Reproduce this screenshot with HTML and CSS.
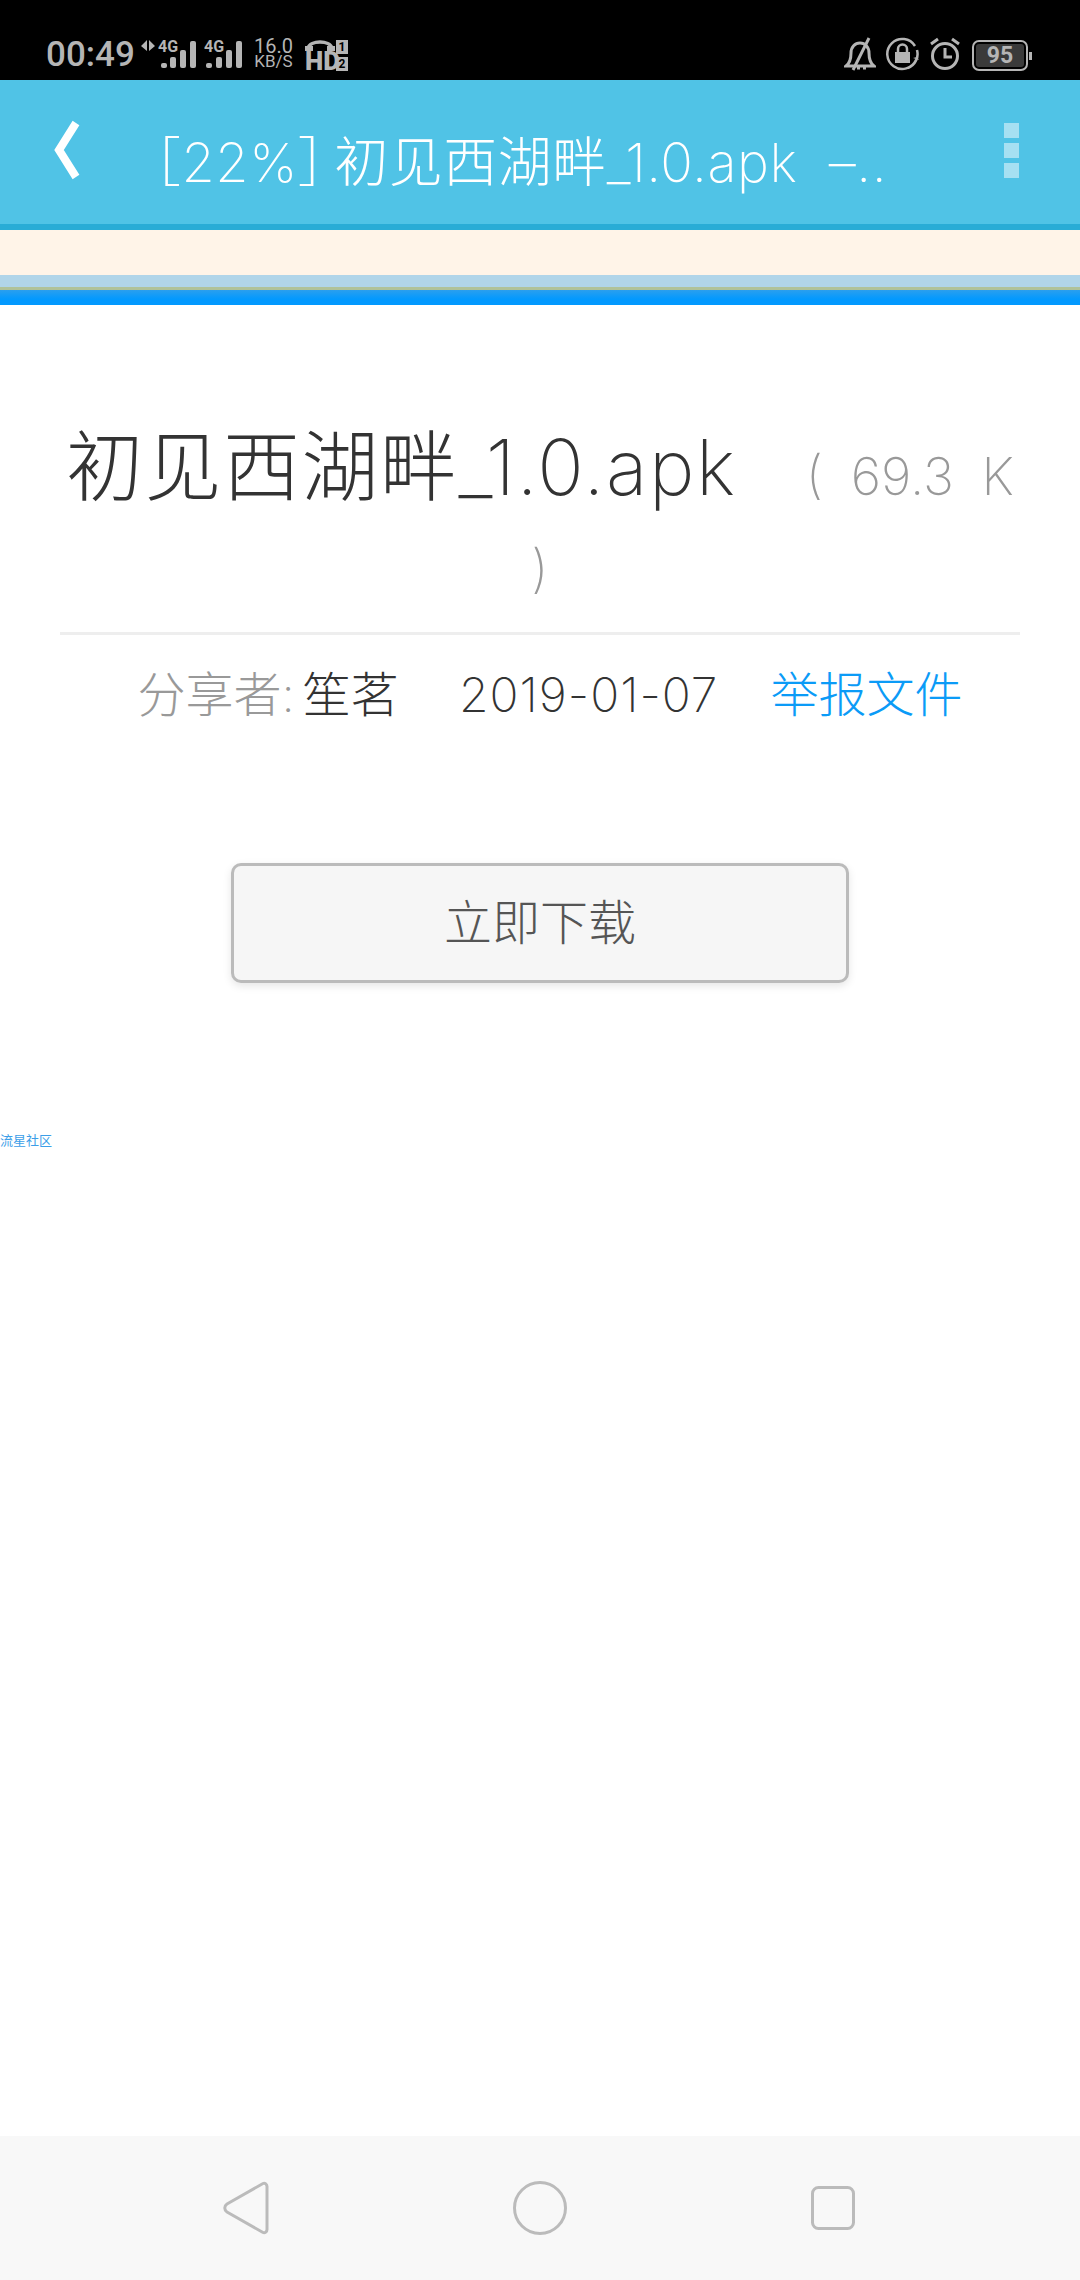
FILE: index.html
```html
<!DOCTYPE html>
<html lang="zh-CN">
<head>
    <meta charset="UTF-8">
    <meta name="viewport" content="width=device-width, initial-scale=1.0">
    <title>初见西湖畔_1.0.apk</title>
    <link rel="stylesheet" href="styles.css">
</head>
<body>
    <div class="phone">
        <div class="status-bar">
            <div class="status-left">
                <span class="clock">00:49</span>
                <svg class="sig-one" width="60" height="34" viewBox="0 0 60 34">
                    <path d="M7 3v11L1 9zM9 3l6 6-6 5z" fill="#b5b5b5"/>
                    <text x="18" y="15" class="sig-label">4G</text>
                    <g fill="#b5b5b5">
                        <rect x="21" y="26" width="6" height="5" rx="2"/>
                        <rect x="30" y="20" width="6" height="11" rx="2"/>
                        <rect x="40" y="13" width="6" height="18" rx="2"/>
                        <rect x="50" y="4" width="6" height="27" rx="2"/>
                    </g>
                </svg>
                <svg class="sig-two" width="40" height="34" viewBox="0 0 40 34">
                    <text x="0" y="15" class="sig-label">4G</text>
                    <g fill="#b5b5b5">
                        <rect x="2" y="26" width="6" height="5" rx="2"/>
                        <rect x="12" y="20" width="6" height="11" rx="2"/>
                        <rect x="22" y="13" width="6" height="18" rx="2"/>
                        <rect x="32" y="4" width="6" height="27" rx="2"/>
                    </g>
                </svg>
                <div class="net-speed">
                    <span class="speed-num">16.0</span>
                    <span class="speed-unit">KB/S</span>
                </div>
                <div class="hd-box">
                    <svg width="30" height="12" viewBox="0 0 30 12">
                        <path d="M3 9C5 1 25 1 27 9" fill="none" stroke="#b5b5b5" stroke-width="3.500"/>
                        <rect x="0" y="7" width="8" height="5" fill="#b5b5b5"/>
                        <rect x="22" y="7" width="8" height="5" fill="#b5b5b5"/>
                    </svg>
                    <span class="hd-text">HD</span>
                </div>
                <div class="sim-box">
                    <span class="sim-num">1</span>
                    <span class="sim-num">2</span>
                </div>
            </div>
            <div class="status-right">
                <svg width="32" height="34" viewBox="0 0 32 34">
                    <path d="M2 29c4-3 5-7 5-13 0-6 4-10 9-10s9 4 9 10c0 6 1 10 5 13z" fill="none" stroke="#b5b5b5" stroke-width="3"/>
                    <path d="M25 1L9 33" stroke="#b5b5b5" stroke-width="3"/>
                    <path d="M13 31h3M19 31h3" stroke="#b5b5b5" stroke-width="3"/>
                </svg>
                <svg width="34" height="34" viewBox="0 0 34 34">
                    <path d="M30 23A15 15 0 1 1 29 9M31 13A15 15 0 0 1 22 31" fill="none" stroke="#b5b5b5" stroke-width="2.500"/>
                    <path d="M27 21l4-1 2 3z" fill="#b5b5b5"/>
                    <rect x="9" y="15" width="15" height="11" fill="#b5b5b5"/>
                    <path d="M12 15v-3a4.500 4.500 0 0 1 9 0v3" fill="none" stroke="#b5b5b5" stroke-width="2.500"/>
                </svg>
                <svg width="30" height="34" viewBox="0 0 30 34">
                    <circle cx="15" cy="19" r="12.500" fill="none" stroke="#b5b5b5" stroke-width="3"/>
                    <path d="M15 11v9h7" fill="none" stroke="#b5b5b5" stroke-width="3"/>
                    <path d="M1 7l7-5M29 7l-7-5" stroke="#b5b5b5" stroke-width="3"/>
                </svg>
                <div class="battery">
                    <div class="battery-body"><span class="battery-level">95</span></div>
                    <div class="battery-nub"></div>
                </div>
            </div>
        </div>

        <div class="app-bar">
            <svg class="back-icon" width="28" height="62" viewBox="0 0 28 62">
                <path d="M23 4L6 31l17 27" fill="none" stroke="#fff" stroke-width="8"/>
            </svg>
            <div class="app-title"><span class="title-pct">［22%］</span>初见西湖畔_1.0.apk &nbsp;&#8211;..</div>
            <div class="menu-dots">
                <span class="dot"></span>
                <span class="dot"></span>
                <span class="dot"></span>
            </div>
        </div>
        <div class="notice-strip"></div>
        <div class="load-strip"></div>

        <div class="content">
            <h1 class="file-name">初见西湖畔_1.0.apk <span class="file-size">( 69.3 K )</span></h1>
            <div class="file-meta">
                <span class="meta-label">分享者:</span>
                <span class="meta-user">笙茗</span>
                <span class="meta-date">2019-01-07</span>
                <a href="#" class="meta-report">举报文件</a>
            </div>
            <div class="btn-wrap">
                <a href="#" class="download-btn">立即下载</a>
            </div>
            <a href="#" class="tiny-link">流星社区</a>
        </div>

        <div class="nav-bar">
            <svg width="46" height="54" viewBox="0 0 46 54">
                <path d="M40 2.500c2-1 4 1 4 3v43c0 2-2 4-4 3L4 31c-3-2-3-6 0-8z" fill="none" stroke="#bbb" stroke-width="3"/>
            </svg>
            <svg width="54" height="54" viewBox="0 0 54 54">
                <circle cx="27" cy="27" r="25.500" fill="none" stroke="#bbb" stroke-width="3"/>
            </svg>
            <svg width="44" height="44" viewBox="0 0 44 44">
                <rect x="1.500" y="1.500" width="41" height="41" rx="6" fill="none" stroke="#bbb" stroke-width="3"/>
            </svg>
        </div>
    </div>
</body>
</html>
```

FILE: styles.css
```css
* {
    box-sizing: border-box;
}
body {
    margin: 0;
    background-color: #fff;
    font-family: 'Inter', 'Noto Sans CJK SC', sans-serif;
    font-weight: 200;
}
.phone {
    width: 1080px;
    height: 2280px;
    display: flex;
    flex-direction: column;
}

/* status bar */
.status-bar {
    height: 80px;
    flex: none;
    background-color: #000;
    color: #b5b5b5;
    display: flex;
    justify-content: space-between;
    align-items: flex-end;
    padding: 0 48px 9px 46px;
}
.status-left,
.status-right {
    display: flex;
    align-items: flex-end;
}
.clock {
    font-family: 'Roboto', sans-serif;
    font-weight: 500;
    font-size: 35px;
    line-height: 32px;
    width: 94px;
}
.sig-two {
    margin-left: 4px;
}
.sig-label {
    font-family: 'Roboto', sans-serif;
    font-weight: 700;
    font-size: 16px;
    fill: #b5b5b5;
}
.net-speed {
    display: flex;
    flex-direction: column;
    align-items: center;
    font-family: 'Roboto', sans-serif;
    font-weight: 400;
    margin: 0 0 2px 9px;
    width: 41px;
}
.speed-num {
    font-size: 20px;
    line-height: 16px;
}
.speed-unit {
    font-size: 17px;
    line-height: 15px;
}
.hd-box {
    display: flex;
    flex-direction: column;
    margin-left: 11px;
    width: 30px;
}
.hd-text {
    font-family: 'Roboto', sans-serif;
    font-weight: 900;
    font-size: 26px;
    line-height: 20px;
}
.sim-box {
    display: flex;
    flex-direction: column;
    gap: 3px;
    margin-left: 1px;
}
.sim-num {
    width: 12px;
    height: 14px;
    background-color: #b5b5b5;
    color: #000;
    font-family: 'Roboto', sans-serif;
    font-weight: 700;
    font-size: 12px;
    line-height: 14px;
    text-align: center;
}
.status-right {
    gap: 10px;
}
.battery {
    display: flex;
    align-items: center;
    margin-left: 2px;
}
.battery-body {
    width: 56px;
    height: 31px;
    border: 2px solid #b5b5b5;
    border-radius: 7px;
    padding: 2px;
}
.battery-level {
    display: block;
    height: 23px;
    background-color: #3a3a3a;
    border-radius: 3px;
    font-family: 'Roboto', sans-serif;
    font-weight: 700;
    font-size: 23px;
    line-height: 23px;
    text-align: center;
}
.battery-nub {
    width: 3px;
    height: 8px;
    margin-left: 1px;
    background-color: #b5b5b5;
}

/* app bar */
.app-bar {
    height: 150px;
    flex: none;
    background-color: #50c3e6;
    border-bottom: 6px solid #29acd6;
    display: flex;
    align-items: flex-start;
    color: #fff;
    padding: 0 61px 0 53px;
}
.back-icon {
    margin-top: 39px;
}
.app-title {
    flex: 1;
    font-size: 54px;
    line-height: 60px;
    letter-spacing: 0.5px;
    margin: 53px 0 0 46px;
    white-space: nowrap;
}
.title-pct {
    margin-right: -18px;
}
.menu-dots {
    display: flex;
    flex-direction: column;
    gap: 5px;
    margin-top: 43px;
}
.dot {
    width: 15px;
    height: 15px;
    background-color: #a6e0f2;
}
.notice-strip {
    height: 45px;
    flex: none;
    background-color: #fff4e8;
}
.load-strip {
    height: 30px;
    flex: none;
    background: linear-gradient(#b1d5e9 0, #b1d5e9 12px, #b0c29a 12px, #b0c29a 15px, #2b9fee 15px, #0399fe 24px);
}

/* main content */
.content {
    flex: 1;
    display: flex;
    flex-direction: column;
}
.file-name {
    margin: 121px 60px 0;
    padding-bottom: 22px;
    border-bottom: 3px solid #eee;
    text-align: center;
    font-size: 77px;
    font-weight: 200;
    line-height: 83px;
    letter-spacing: 1.5px;
    color: #333;
}
.file-size {
    font-size: 52px;
    letter-spacing: 0;
    word-spacing: 13px;
    color: #999;
    margin-left: 46px;
}
.file-meta {
    display: flex;
    justify-content: center;
    align-items: baseline;
    font-size: 48px;
    line-height: 60px;
    margin-top: 30px;
    padding-left: 20px;
    color: #333;
}
.meta-label {
    color: #999;
}
.meta-user {
    margin-left: 8px;
}
.meta-date {
    margin-left: 60px;
    letter-spacing: 1px;
}
.meta-report {
    margin-left: 52px;
    color: #0b9bf7;
    text-decoration: none;
}
.btn-wrap {
    display: flex;
    justify-content: center;
    margin-top: 138px;
}
.download-btn {
    width: 618px;
    height: 120px;
    border: 3px solid #bbb;
    border-radius: 10px;
    background-color: #f6f6f6;
    box-shadow: 0 3px 8px rgba(0,0,0,0.1);
    color: #555;
    font-size: 48px;
    line-height: 114px;
    text-align: center;
    text-decoration: none;
}
.tiny-link {
    align-self: flex-start;
    margin-top: 147px;
    font-size: 13px;
    line-height: 20px;
    font-weight: 400;
    color: #3c9ee8;
    text-decoration: none;
}

/* nav bar */
.nav-bar {
    height: 144px;
    flex: none;
    background-color: #f8f8f8;
    display: flex;
    align-items: center;
    gap: 244px;
    padding-left: 223px;
}
```
